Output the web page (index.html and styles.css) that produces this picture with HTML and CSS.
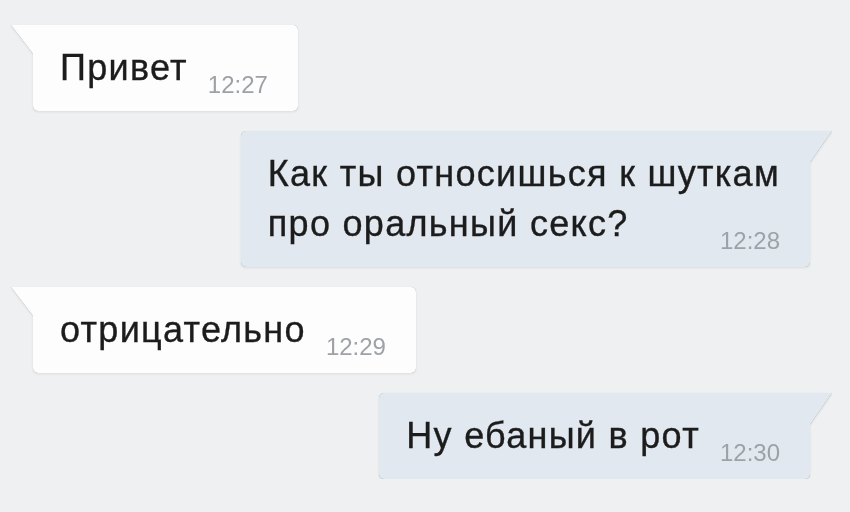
FILE: index.html
```html
<!DOCTYPE html>
<html lang="ru">
<head>
    <meta charset="UTF-8">
    <title>Чат</title>
    <link rel="stylesheet" href="styles.css">
</head>
<body>
    <div class="chat">
        <!-- incoming -->
        <div class="msg in">
            <div class="bubble">
                <span class="text">Привет</span><span class="time">12:27</span>
            </div>
        </div>

        <!-- outgoing, two lines, time pinned right -->
        <div class="msg out">
            <div class="bubble">
                <span class="text">Как ты относишься к шуткам<br>про оральный секс?</span><span class="time time-end">12:28</span>
            </div>
        </div>

        <div class="msg in">
            <div class="bubble">
                <span class="text">отрицательно</span><span class="time">12:29</span>
            </div>
        </div>

        <div class="msg out">
            <div class="bubble">
                <span class="text">Ну ебаный в рот</span><span class="time">12:30</span>
            </div>
        </div>
    </div>
</body>
</html>
```

FILE: styles.css
```css
body {
    margin: 0;
    background-color: #eef0f2;
    font-family: "Liberation Sans", Arial, sans-serif;
    color: #1c1c1c;
}
.chat {
    display: flex;
    flex-direction: column;
    gap: 20px;
    padding-top: 25px;
}
.msg {
    display: flex;
    filter: drop-shadow(0 0 0.6px rgba(0,0,0,0.4)) drop-shadow(0 1px 1px rgba(0,0,0,0.08));
}
.msg.in {
    justify-content: flex-start;
    padding-left: 33px;
}
.msg.out {
    justify-content: flex-end;
    padding-right: 40px;
}
.bubble {
    position: relative;
    padding: 18px 30px 18px 27px;
    border-radius: 5px;
    font-size: 36px;
    line-height: 50px;
    white-space: nowrap;
}
.text {
    letter-spacing: 1.3px;
    -webkit-text-stroke: 0.35px #1c1c1c;
}
.msg.in .bubble {
    background: #fdfdfd;
    border-top-left-radius: 0;
}
.msg.out .bubble {
    background: #e2e8ef;
    border-top-right-radius: 0;
}
/* tail */
.bubble::before {
    content: "";
    position: absolute;
    top: 0;
    width: 23px;
}
.msg.in .bubble::before {
    left: -22px;
    height: 30px;
    background: #fdfdfd;
    clip-path: polygon(0 0, 100% 0, 100% 100%);
}
.msg.out .bubble::before {
    right: -22px;
    height: 33px;
    background: #e2e8ef;
    clip-path: polygon(0 0, 100% 0, 0 100%);
}
.time {
    display: inline-block;
    margin-left: 20px;
    font-size: 24px;
    line-height: 16px;
    color: #9ea2a7;
    vertical-align: -13px;
}
.time-end {
    float: right;
    margin-top: 34px;
}
```
